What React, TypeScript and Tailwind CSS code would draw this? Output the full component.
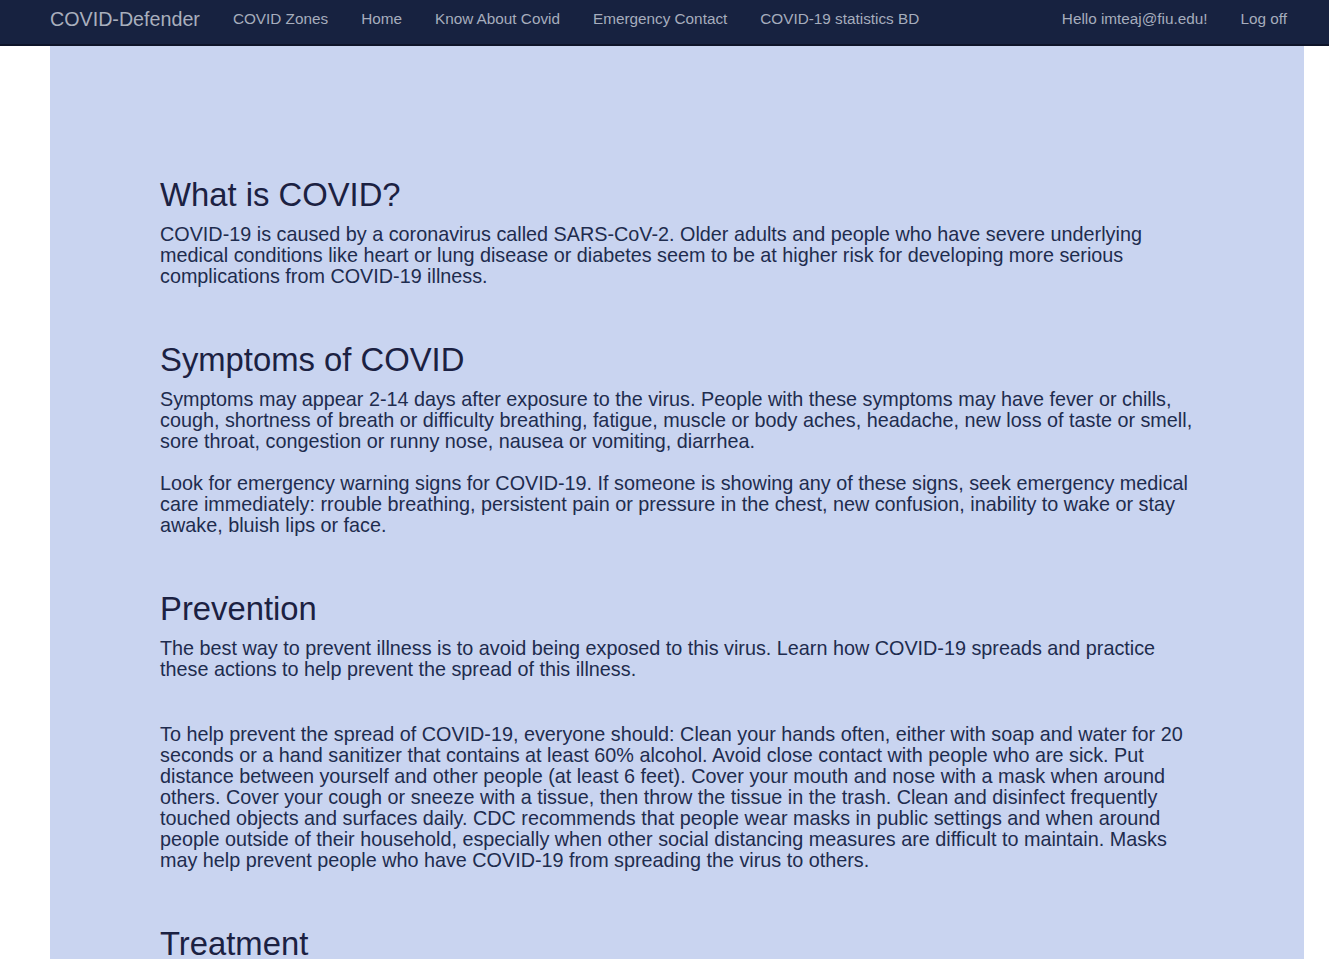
const navLinks = ["COVID Zones", "Home", "Know About Covid", "Emergency Contact", "COVID-19 statistics BD"]

const sections = [
  {
    title: "What is COVID?",
    paragraphs: [
      "COVID-19 is caused by a coronavirus called SARS-CoV-2. Older adults and people who have severe underlying medical conditions like heart or lung disease or diabetes seem to be at higher risk for developing more serious complications from COVID-19 illness.",
    ],
  },
  {
    title: "Symptoms of COVID",
    paragraphs: [
      "Symptoms may appear 2-14 days after exposure to the virus. People with these symptoms may have fever or chills, cough, shortness of breath or difficulty breathing, fatigue, muscle or body aches, headache, new loss of taste or smell, sore throat, congestion or runny nose, nausea or vomiting, diarrhea.",
      "Look for emergency warning signs for COVID-19. If someone is showing any of these signs, seek emergency medical care immediately: rrouble breathing, persistent pain or pressure in the chest, new confusion, inability to wake or stay awake, bluish lips or face.",
    ],
  },
  {
    title: "Prevention",
    gap: true,
    paragraphs: [
      "The best way to prevent illness is to avoid being exposed to this virus. Learn how COVID-19 spreads and practice these actions to help prevent the spread of this illness.",
      "To help prevent the spread of COVID-19, everyone should: Clean your hands often, either with soap and water for 20 seconds or a hand sanitizer that contains at least 60% alcohol. Avoid close contact with people who are sick. Put distance between yourself and other people (at least 6 feet). Cover your mouth and nose with a mask when around others. Cover your cough or sneeze with a tissue, then throw the tissue in the trash. Clean and disinfect frequently touched objects and surfaces daily. CDC recommends that people wear masks in public settings and when around people outside of their household, especially when other social distancing measures are difficult to maintain. Masks may help prevent people who have COVID-19 from spreading the virus to others.",
    ],
  },
  {
    title: "Treatment",
    paragraphs: [],
  },
]

function Navbar() {
  return (
    <nav className="h-[46px] bg-[#172240] border-b-2 border-[#0e1429]">
      <div className="ml-[50px] w-[1254px] pr-[17px] h-full flex items-center justify-between pb-[5px]">
        <div className="flex items-center gap-[33px]">
          <a className="text-[19.7px] text-[#a9afbd]">COVID-Defender</a>
          {navLinks.map((link) => (
            <a key={link} className="text-[15.3px] text-[#a6adbd]">
              {link}
            </a>
          ))}
        </div>
        <div className="flex items-center gap-[33px]">
          <a className="text-[15.3px] text-[#a6adbd]">Hello imteaj@fiu.edu!</a>
          <a className="text-[15.3px] text-[#a6adbd]">Log off</a>
        </div>
      </div>
    </nav>
  )
}

export default function App() {
  return (
    <div className="min-h-screen bg-white font-['Liberation_Sans',Arial,sans-serif]">
      <Navbar />
      <main className="ml-[50px] w-[1254px] bg-[#c9d4f0] pl-[110px] pr-[100px] pt-[76px] pb-10">
        {sections.map((section) => (
          <section key={section.title} className="mt-[55px]">
            <h2 className="text-[32.8px] leading-[36px] text-[#1b2142] mb-[11px]">{section.title}</h2>
            {section.paragraphs.map((p, i) => (
              <p
                key={i}
                className={
                  section.gap && i === 0
                    ? "text-[19.8px] leading-[21px] text-[#1e2c4e] mb-[44px]"
                    : "text-[19.8px] leading-[21px] text-[#1e2c4e] mb-[21px]"
                }
              >
                {p}
              </p>
            ))}
          </section>
        ))}
      </main>
    </div>
  )
}
